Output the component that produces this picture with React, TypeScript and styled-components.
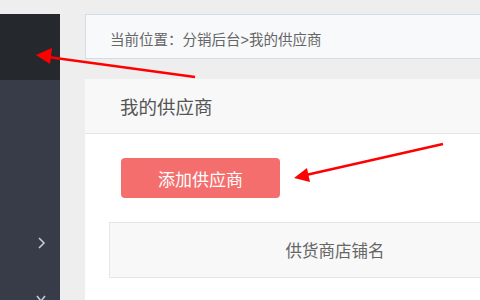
import React from "react";
import styled, { createGlobalStyle } from "styled-components";

const GlobalStyle = createGlobalStyle`
  html, body {
    margin: 0;
    padding: 0;
    background: #eeeeee;
    font-family: "Liberation Sans", "Noto Sans CJK SC", sans-serif;
    overflow: hidden;
  }
`;

const Page = styled.div`
  position: relative;
  width: 480px;
  height: 300px;
  padding-top: 14px;
  box-sizing: border-box;
  display: flex;
  overflow: hidden;
`;

const Sidebar = styled.div`
  width: 60px;
  flex-shrink: 0;
  display: flex;
  flex-direction: column;
  background: #383c49;
`;

const SideTop = styled.div`
  height: 66px;
  flex-shrink: 0;
  background: #25292d;
`;

const SideItem = styled.div<{ $h: number }>`
  height: ${(p) => p.$h}px;
  flex-shrink: 0;
  display: flex;
  align-items: flex-end;
  justify-content: flex-end;
  padding-right: 14px;
  color: #c3cad8;
`;

const Main = styled.div`
  flex: 1;
  min-width: 0;
  padding-left: 25px;
  display: flex;
  flex-direction: column;
`;

const Breadcrumb = styled.div`
  height: 45px;
  flex-shrink: 0;
  box-sizing: border-box;
  border: 1px solid #d3dde6;
  border-right: none;
  background: #f7f9fb;
  display: flex;
  align-items: center;
  padding: 3px 0 0 24px;
  font-size: 14.5px;
  color: #666;
  white-space: nowrap;
  margin-bottom: 20px;
`;

const Panel = styled.div`
  flex: 1;
  background: #fff;
  display: flex;
  flex-direction: column;
`;

const PanelHeader = styled.div`
  height: 55px;
  flex-shrink: 0;
  box-sizing: border-box;
  background: #f8f8f8;
  border-bottom: 1px solid #e6e6e6;
  display: flex;
  align-items: center;
  padding-left: 35px;
  font-size: 18.5px;
  color: #555;
`;

const PanelBody = styled.div`
  padding: 24px 0 0 24px;
  display: flex;
  flex-direction: column;
  align-items: flex-start;
`;

const AddButton = styled.button`
  margin-left: 12px;
  width: 159px;
  height: 40px;
  border: none;
  border-radius: 4px;
  background: #f46e6e;
  color: #fff;
  font-family: inherit;
  font-size: 17px;
  cursor: pointer;
`;

const Table = styled.div`
  margin-top: 24px;
  width: 450px;
  border: 1px solid #e6e6e6;
  border-bottom: none;
`;

const HeadRow = styled.div`
  height: 54px;
  background: #f8f8f8;
  border-bottom: 1px solid #e6e6e6;
  display: flex;
  align-items: center;
  justify-content: center;
  font-size: 16.5px;
  color: #666;
`;

const Arrows = styled.svg`
  position: absolute;
  left: 0;
  top: 0;
  pointer-events: none;
`;

const Chevron = ({ down }: { down?: boolean }) => (
  <svg width="10" height="12" viewBox="0 0 10 12">
    {down ? (
      <path d="M1 3 L5 8 L9 3" fill="none" stroke="currentColor" strokeWidth="1.6" />
    ) : (
      <path d="M3 1 L8 6 L3 11" fill="none" stroke="currentColor" strokeWidth="1.6" />
    )}
  </svg>
);

export default function App() {
  return (
    <>
      <GlobalStyle />
      <Page>
        <Sidebar>
          <SideTop />
          <SideItem $h={169}>
            <Chevron />
          </SideItem>
          <SideItem $h={56}>
            <Chevron down />
          </SideItem>
        </Sidebar>
        <Main>
          <Breadcrumb>当前位置：分销后台&gt;我的供应商</Breadcrumb>
          <Panel>
            <PanelHeader>我的供应商</PanelHeader>
            <PanelBody>
              <AddButton>添加供应商</AddButton>
              <Table>
                <HeadRow>供货商店铺名</HeadRow>
              </Table>
            </PanelBody>
          </Panel>
        </Main>
        <Arrows width="480" height="300" viewBox="0 0 480 300">
          <line x1="195" y1="77" x2="48" y2="57" stroke="#ff0000" strokeWidth="2.5" />
          <polygon points="36,55 52,48 50,64" fill="#ff0000" />
          <line x1="443" y1="144" x2="306" y2="175" stroke="#ff0000" strokeWidth="2.5" />
          <polygon points="294,178 307,168 310,182" fill="#ff0000" />
        </Arrows>
      </Page>
    </>
  );
}
